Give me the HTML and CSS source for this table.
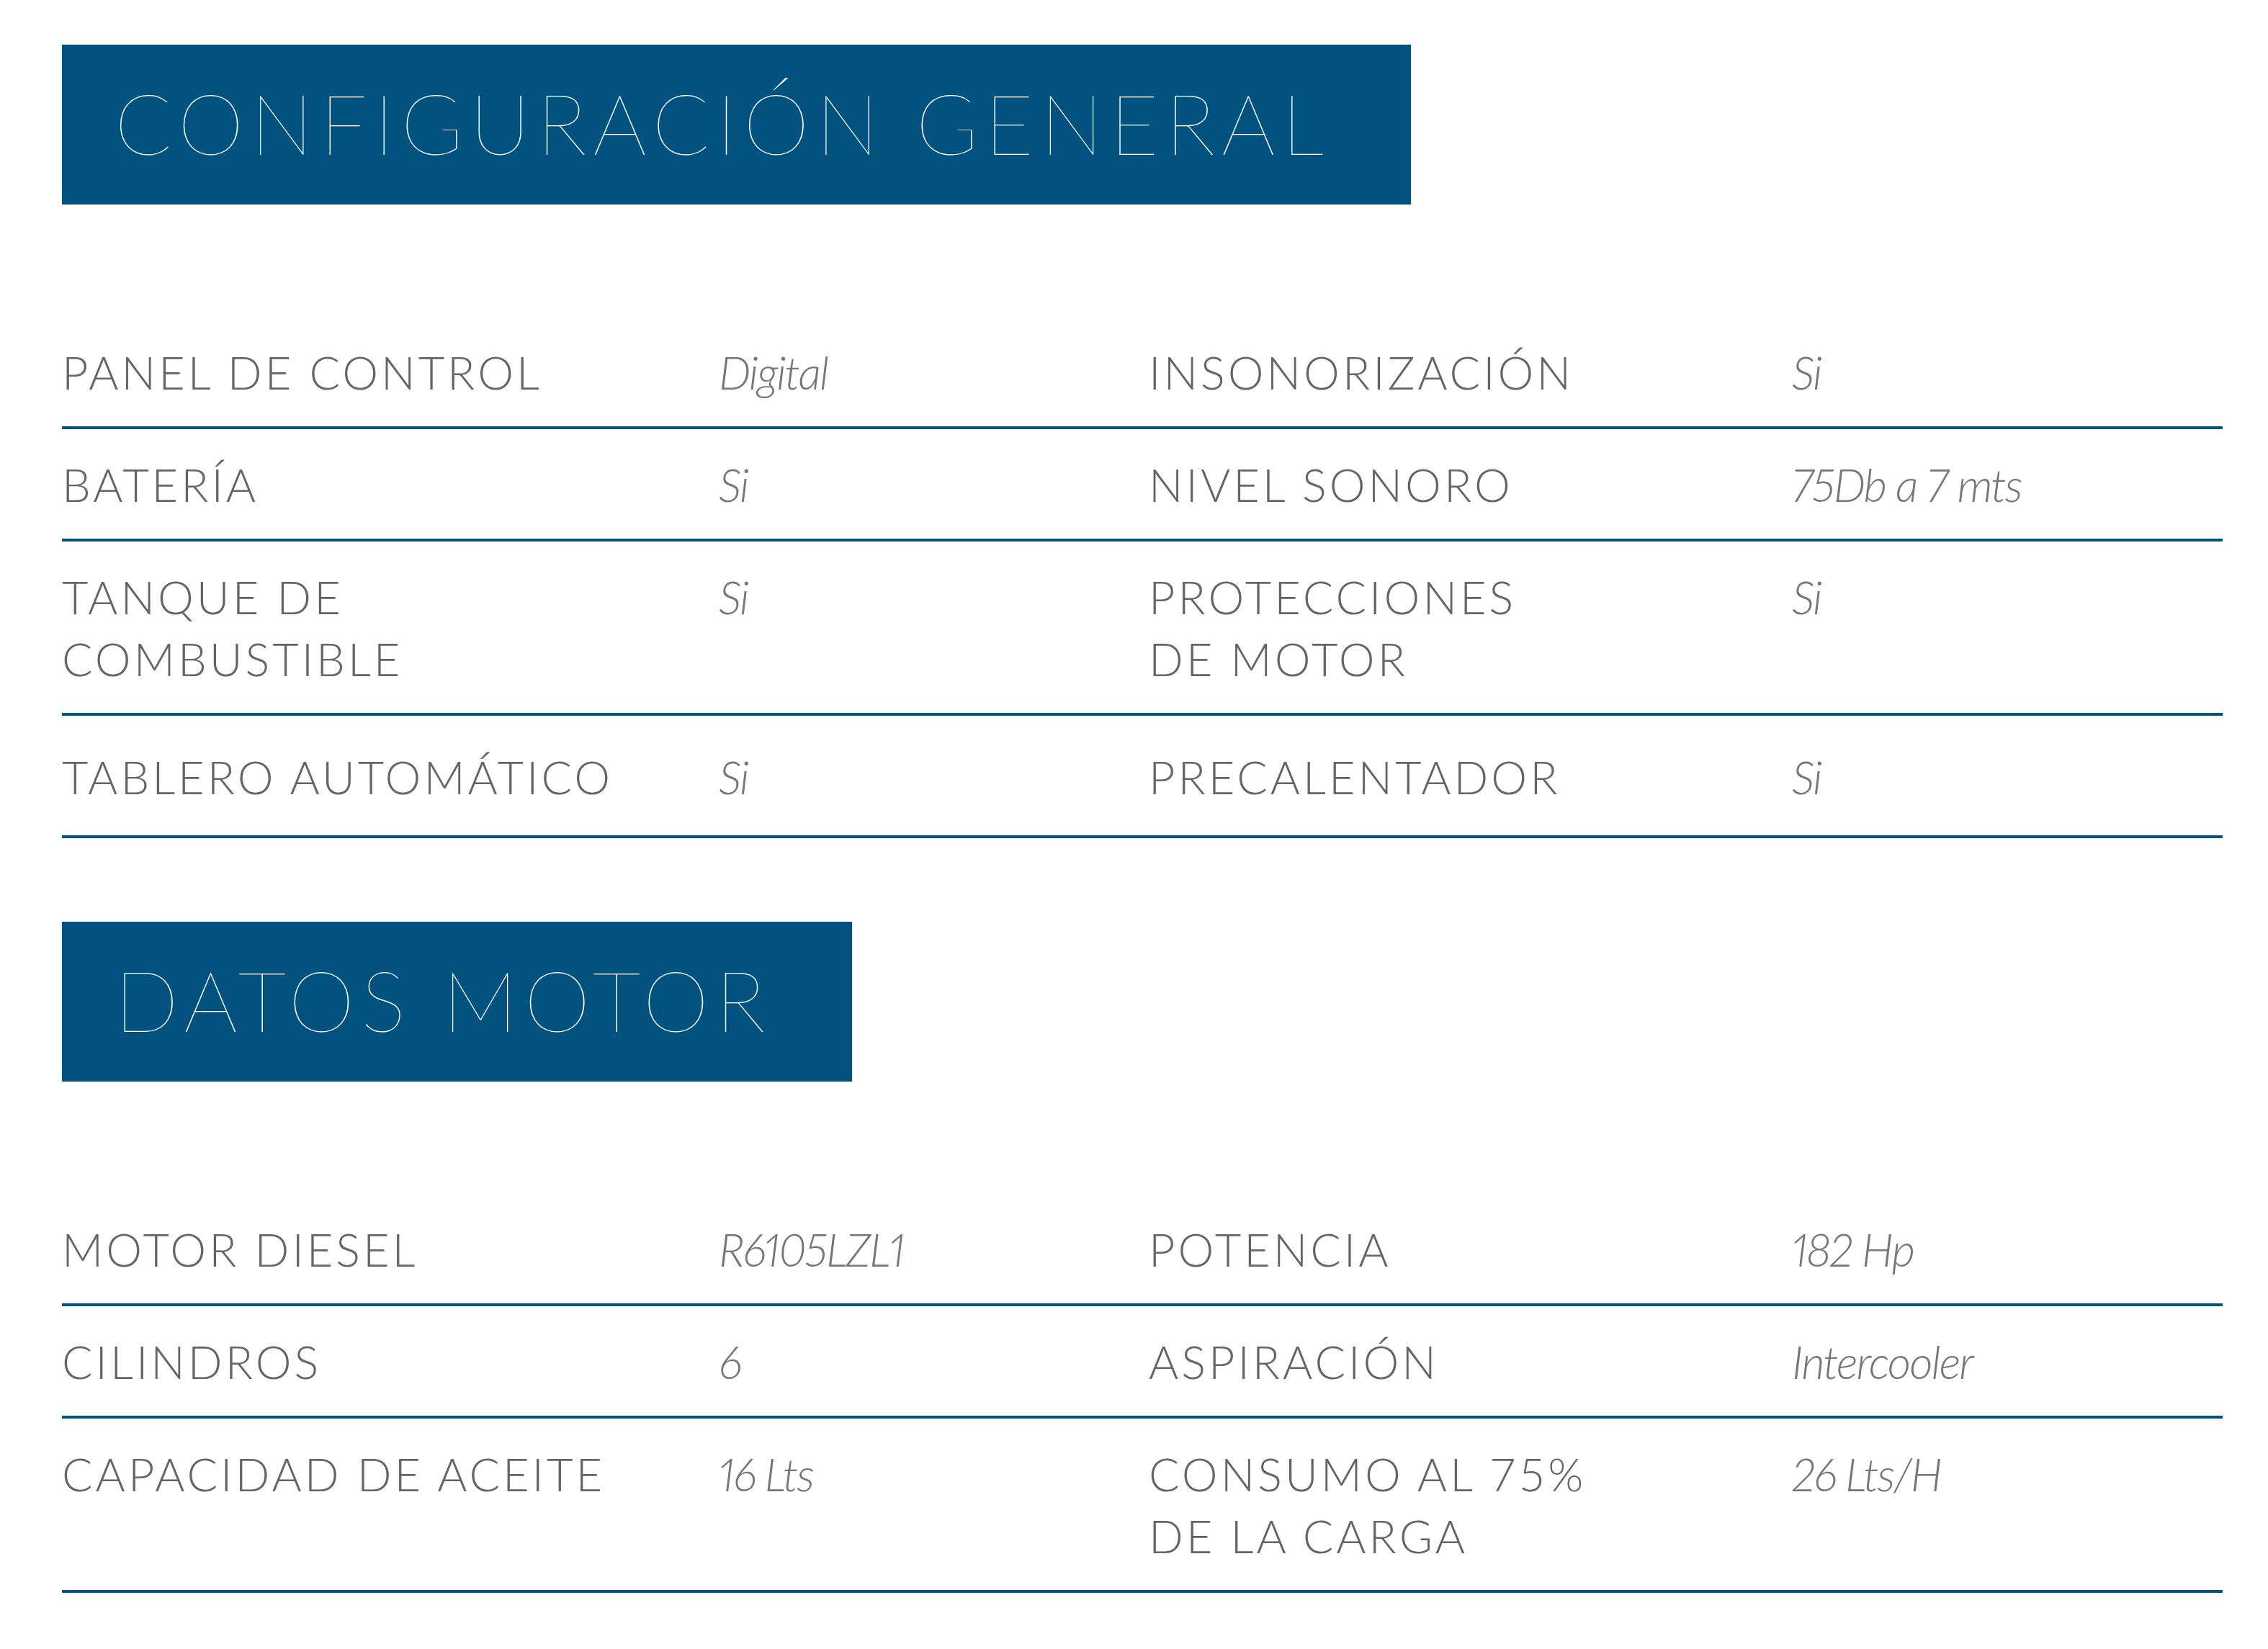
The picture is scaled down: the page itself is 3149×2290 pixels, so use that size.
FILE: index.html
```html
<!DOCTYPE html>
<html lang="es">
<head>
<meta charset="utf-8">
<title>Especificaciones</title>
<link rel="stylesheet" href="styles.css">
</head>
<body>
<main class="sheet">
  <section class="section">
    <h1 class="banner">CONFIGURACIÓN GENERAL</h1>
    <div class="specs">
      <div class="row">
        <div class="label">PANEL DE CONTROL</div><div class="value">Digital</div>
        <div class="label">INSONORIZACIÓN</div><div class="value">Si</div>
      </div>
      <div class="row">
        <div class="label">BATERÍA</div><div class="value">Si</div>
        <div class="label">NIVEL SONORO</div><div class="value">75Db a 7 mts</div>
      </div>
      <div class="row">
        <div class="label">TANQUE DE<br>COMBUSTIBLE</div><div class="value">Si</div>
        <div class="label">PROTECCIONES<br>DE MOTOR</div><div class="value">Si</div>
      </div>
      <div class="row row-loose">
        <div class="label">TABLERO AUTOMÁTICO</div><div class="value">Si</div>
        <div class="label">PRECALENTADOR</div><div class="value">Si</div>
      </div>
    </div>
  </section>
  <section class="section">
    <h1 class="banner">DATOS MOTOR</h1>
    <div class="specs">
      <div class="row">
        <div class="label">MOTOR DIESEL</div><div class="value">R6105LZL1</div>
        <div class="label">POTENCIA</div><div class="value">182 Hp</div>
      </div>
      <div class="row">
        <div class="label">CILINDROS</div><div class="value">6</div>
        <div class="label">ASPIRACIÓN</div><div class="value">Intercooler</div>
      </div>
      <div class="row">
        <div class="label">CAPACIDAD DE ACEITE</div><div class="value">16 Lts</div>
        <div class="label">CONSUMO AL 75%<br>DE LA CARGA</div><div class="value">26 Lts/H</div>
      </div>
    </div>
  </section>
</main>
</body>
</html>
```
FILE: styles.css
```css
html, body {
  margin: 0;
  padding: 0;
  background: #ffffff;
}

body {
  font-family: "Lato", "Liberation Sans", sans-serif;
}

.sheet {
  padding: 62px 63px 0 86px;
  display: flex;
  flex-direction: column;
  gap: 116px;
}

.section {
  display: flex;
  flex-direction: column;
  align-items: flex-start;
  gap: 156px;
}

.banner {
  margin: 0;
  background: #02527f;
  color: #ffffff;
  font-weight: 200;
  font-size: 117px;
  line-height: 117px;
  letter-spacing: 9px;
  padding: 50px 112px 55px 73px;
  white-space: nowrap;
}

.specs {
  align-self: stretch;
  width: 3000px;
}

.row {
  display: grid;
  grid-template-columns: 912px 597px 893px 1fr;
  padding: 34px 0 32px;
  border-bottom: 4px solid #02527f;
  font-size: 63px;
  line-height: 86px;
}

.row-loose {
  padding-top: 42px;
  padding-bottom: 38px;
}

.label {
  color: #656565;
  font-weight: 300;
  letter-spacing: 4px;
}

.value {
  color: #777777;
  font-weight: 300;
  font-style: italic;
  font-variant-numeric: proportional-nums;
  letter-spacing: -2px;
}
```
